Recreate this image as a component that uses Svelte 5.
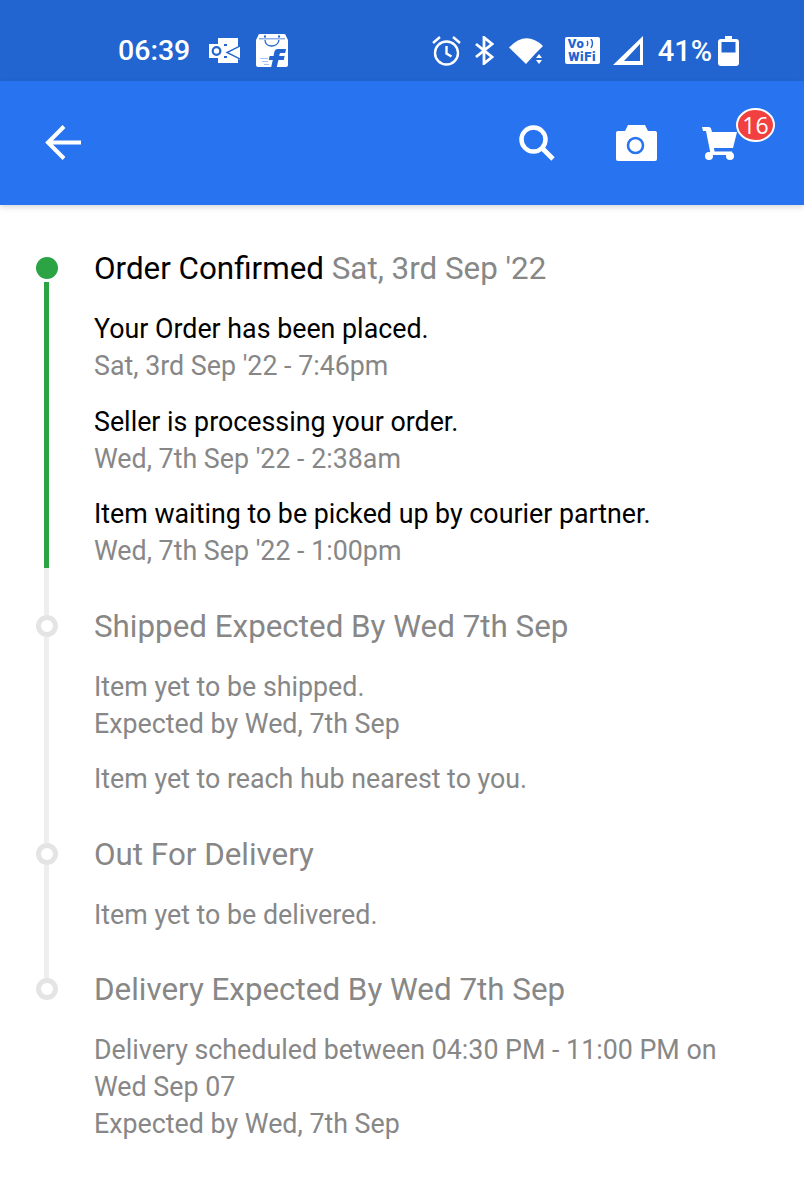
<script>
  const steps = [
    {
      title: 'Order Confirmed',
      date: "Sat, 3rd Sep '22",
      done: true,
      groups: [
        ['Your Order has been placed.', "Sat, 3rd Sep '22 - 7:46pm"],
        ['Seller is processing your order.', "Wed, 7th Sep '22 - 2:38am"],
        ['Item waiting to be picked up by courier partner.', "Wed, 7th Sep '22 - 1:00pm"],
      ],
    },
    {
      title: 'Shipped Expected By Wed 7th Sep',
      groups: [
        ['Item yet to be shipped.', 'Expected by Wed, 7th Sep'],
        ['Item yet to reach hub nearest to you.'],
      ],
    },
    {
      title: 'Out For Delivery',
      groups: [['Item yet to be delivered.']],
    },
    {
      title: 'Delivery Expected By Wed 7th Sep',
      last: true,
      groups: [
        ['Delivery scheduled between 04:30 PM - 11:00 PM on Wed Sep 07', 'Expected by Wed, 7th Sep'],
      ],
    },
  ];
</script>

<div class="phone">
  <div class="status">
    <div class="status-left">
      <span class="time">06:39</span>
      <svg width="32" height="25" viewBox="0 0 32 25">
        <path fill="#fff" d="M9 0h20v9L31 8v14l-2-1v4H9z" />
        <path fill="#fff" d="M0 6h15v14H0z" />
        <circle cx="7.500" cy="13" r="3.800" fill="none" stroke="#2265d1" stroke-width="2.200" />
        <path fill="none" stroke="#2265d1" stroke-width="1.400" d="M33 7L18 14.500 33 22" />
        <path fill="#2265d1" d="M15 6h3v2h-3zM15 18h3v2h-3z" />
      </svg>
      <svg class="bag" width="32" height="33" viewBox="0 0 32 33">
        <path fill="#fff" d="M4 0h24q2 0 2 2l2 4v25q0 2-2 2H2q-2 0-2-2V6l2-4q0-2 2-2z" />
        <path fill="#2265d1" d="M3 4.500h26v.8H3zM8 1.500h2v2H8zM22 1.500h2v2h-2z" />
        <path fill="none" stroke="#2265d1" stroke-width="1.300" d="M9 6c0 8 13 8 14 0" />
        <path fill="#2265d1" d="M20 15h10l-.8 4h-4.400q-1 0-1.200 1l-.4 2h5.400l-.8 4h-5.400L20.800 33h-5.600l1.600-7h-4l.8-4h4l.5-3q.6-4 3.700-4z" />
        <path fill="#a9c4ee" d="M4 24h8v1H4zM6 27h6v1H6zM8 30h5v1H8z" />
      </svg>
    </div>
    <div class="status-right">
      <svg width="29" height="30" viewBox="0 0 29 30">
        <circle cx="14.500" cy="17" r="11.500" fill="none" stroke="#fff" stroke-width="2.400" />
        <path fill="none" stroke="#fff" stroke-width="2.400" d="M14.500 10v7.500l5 3M1 7l7-6M28 7l-7-6" />
      </svg>
      <svg class="bt" width="19" height="29" viewBox="0 0 19 29">
        <path fill="none" stroke="#fff" stroke-width="2.800" d="M1 8l16 13-8 6.500V1.500L17 8 1 21" />
      </svg>
      <svg class="wifi" width="34" height="26" viewBox="0 0 34 26">
        <path fill="#fff" d="M0 9.500Q17-8 34 8l-7.500 7.500L17 26z" />
        <path fill="#fff" d="M27 20h6l-3-4zM27 22h6l-3 4z" />
      </svg>
      <div class="vowifi">
        <div class="vo">
          <span>Vo</span>
          <svg width="8" height="10" viewBox="0 0 8 10">
            <path fill="none" stroke="#2265d1" stroke-width="1.400" d="M1 2q1.500 2 0 5M5 0q3 4 0 9" />
          </svg>
        </div>
        <span>WiFi</span>
      </div>
      <svg class="signal" width="30" height="29" viewBox="0 0 30 29">
        <path fill="#fff" fill-rule="evenodd" d="M30 0V29H0zM27 8L11 25H27z" />
      </svg>
      <span class="pct">41%</span>
      <svg class="batt" width="21" height="30" viewBox="0 0 21 30">
        <path fill="#fff" d="M7 0h7v3h4q3 0 3 3v21q0 3-3 3H3q-3 0-3-3V6q0-3 3-3h4z" />
        <path fill="#2265d1" d="M3.500 6h14v10.500h-14z" />
      </svg>
    </div>
  </div>

  <header class="appbar">
    <svg width="38" height="36" viewBox="0 0 38 36">
      <path fill="none" stroke="#fff" stroke-width="4" d="M37 17.500H4M20 1.500L4 17.500l16 16" />
    </svg>
    <div class="actions">
      <svg width="36" height="36" viewBox="0 0 36 36">
        <circle cx="14.500" cy="14.500" r="12" fill="none" stroke="#fff" stroke-width="4.500" />
        <path fill="none" stroke="#fff" stroke-width="4.800" d="M22 22l12 12" />
      </svg>
      <svg width="41" height="36" viewBox="0 0 41 36">
        <path fill="#fff" d="M9 6l3-6h17l3 6h7q2 0 2 2v26q0 2-2 2H2q-2 0-2-2V8q0-2 2-2z" />
        <circle cx="19.500" cy="20.500" r="7.500" fill="none" stroke="#2874f0" stroke-width="2.600" />
      </svg>
      <div class="cart">
        <svg width="35" height="33" viewBox="0 0 35 33">
          <path fill="#fff" d="M0 0h7q1.500 0 2 1.500L10 5h25l-4 16H12l.5 3.500H30V28H10q-1 0-1.500-1.500L4 4H1z" />
          <circle cx="7" cy="29" r="4" fill="#fff" />
          <circle cx="28" cy="29" r="4" fill="#fff" />
        </svg>
        <span class="badge">16</span>
      </div>
    </div>
  </header>

  <main class="timeline">
    {#each steps as step}
      <section class="step">
        <div class="rail">
          {#if !step.done}<span class="seg top"></span>{/if}
          <span class="dot" class:on={step.done}></span>
          {#if step.done}
            <span class="seg green"></span>
            <span class="seg tail"></span>
          {:else if !step.last}
            <span class="seg fill"></span>
          {/if}
        </div>
        <div class="content" class:muted={!step.done}>
          <h2>{step.title}{#if step.date}{' '}<span class="date">{step.date}</span>{/if}</h2>
          {#each step.groups as group}
            <div class="group">
              {#each group as line, i}
                <p class:sub={i > 0}>{line}</p>
              {/each}
            </div>
          {/each}
        </div>
      </section>
    {/each}
  </main>
</div>

<style>
  :global(body) {
    background: #fff;
  }
  .phone {
    width: 804px;
    height: 1200px;
    overflow: hidden;
    font-family: Roboto, sans-serif;
  }
  svg {
    display: block;
    flex: none;
  }

  .status {
    height: 81px;
    background: #2265d1;
    color: #fff;
    display: flex;
    justify-content: space-between;
    align-items: center;
    padding: 20px 65px 0 118px;
    box-sizing: border-box;
  }
  .status-left,
  .status-right {
    display: flex;
    align-items: center;
  }
  .status-left {
    gap: 19px;
  }
  .bag {
    margin-left: -4px;
  }
  .status-right {
    gap: 14px;
  }
  .time {
    font-size: 28.500px;
    font-weight: 500;
  }
  .pct {
    font-size: 29px;
    font-weight: 500;
  }
  .bt {
    margin-right: 1px;
  }
  .wifi {
    margin-right: 8px;
  }
  .signal {
    margin-left: -1px;
    margin-right: 1px;
  }
  .batt {
    margin-left: -8px;
  }
  .vowifi {
    width: 35px;
    height: 27px;
    background: #fff;
    border-radius: 2px;
    color: #2265d1;
    font-size: 13px;
    line-height: 13px;
    letter-spacing: 0.6px;
    font-weight: 900;
    display: flex;
    flex-direction: column;
    align-items: center;
  }
  .vo {
    display: flex;
    align-items: center;
    gap: 2px;
    padding-left: 3px;
    align-self: flex-start;
  }

  .appbar {
    height: 124px;
    background: #2874f0;
    box-shadow: 0 2px 6px rgba(0, 0, 0, 0.16);
    display: flex;
    justify-content: space-between;
    align-items: center;
    padding: 0 67px 0 44px;
    box-sizing: border-box;
    position: relative;
  }
  .actions {
    display: flex;
    align-items: center;
    gap: 61px;
  }
  .cart {
    position: relative;
    width: 35px;
    margin-left: -16px;
  }
  .badge {
    position: absolute;
    left: 34px;
    top: -19px;
    width: 35px;
    height: 30px;
    border: 2px solid #fff;
    border-radius: 50%;
    background: #f24040;
    color: #fff;
    font-size: 23px;
    line-height: 30px;
    text-align: center;
    font-family: "Open Sans", sans-serif;
  }

  .timeline {
    padding-top: 44px;
  }
  .step {
    display: flex;
  }
  .rail {
    width: 94px;
    flex: none;
    display: flex;
    flex-direction: column;
    align-items: flex-start;
  }
  .seg {
    display: block;
    width: 5px;
    margin-left: 44px;
    background: #eee;
  }
  .seg.top {
    height: 8px;
  }
  .seg.fill {
    flex: 1;
  }
  .seg.green {
    flex: 1;
    margin-top: 3px;
    background: #2ca444;
  }
  .seg.tail {
    height: 39px;
  }
  .dot {
    display: block;
    width: 22px;
    height: 22px;
    margin-left: 36px;
    box-sizing: border-box;
    border: 5px solid #e4e4e4;
    border-radius: 50%;
    background: #fff;
  }
  .dot.on {
    margin-top: 8px;
    border: none;
    background: #2ca444;
  }
  .content {
    flex: 1;
    padding-bottom: 36.500px;
    padding-right: 70px;
    color: #000;
  }
  .content.muted {
    color: #878787;
  }
  h2 {
    margin: 0 0 22px;
    font-size: 31.350px;
    line-height: 40px;
    font-weight: 400;
  }
  .date {
    color: #878787;
  }
  .group {
    margin-bottom: 18.500px;
  }
  .group:last-child {
    margin-bottom: 0;
  }
  p {
    margin: 0;
    font-size: 26.800px;
    line-height: 37px;
  }
  .sub {
    color: #878787;
  }
</style>
